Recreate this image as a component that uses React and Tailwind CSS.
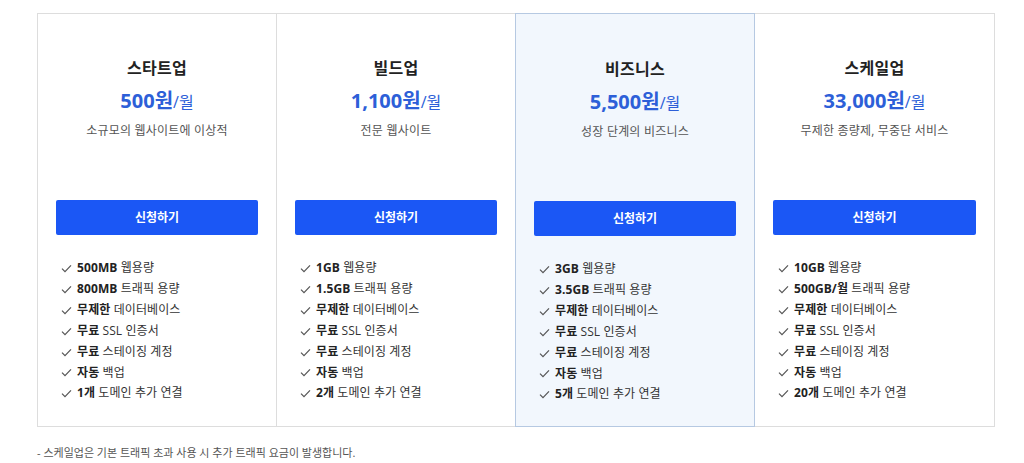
import React from 'react'

const plans = [
  {
    name: '스타트업',
    price: '500원',
    desc: '소규모의 웹사이트에 이상적',
    features: [
      ['500MB', ' 웹용량'],
      ['800MB', ' 트래픽 용량'],
      ['무제한', ' 데이터베이스'],
      ['무료', ' SSL 인증서'],
      ['무료', ' 스테이징 계정'],
      ['자동', ' 백업'],
      ['1개', ' 도메인 추가 연결'],
    ],
  },
  {
    name: '빌드업',
    price: '1,100원',
    desc: '전문 웹사이트',
    features: [
      ['1GB', ' 웹용량'],
      ['1.5GB', ' 트래픽 용량'],
      ['무제한', ' 데이터베이스'],
      ['무료', ' SSL 인증서'],
      ['무료', ' 스테이징 계정'],
      ['자동', ' 백업'],
      ['2개', ' 도메인 추가 연결'],
    ],
  },
  {
    name: '비즈니스',
    price: '5,500원',
    desc: '성장 단계의 비즈니스',
    highlight: true,
    features: [
      ['3GB', ' 웹용량'],
      ['3.5GB', ' 트래픽 용량'],
      ['무제한', ' 데이터베이스'],
      ['무료', ' SSL 인증서'],
      ['무료', ' 스테이징 계정'],
      ['자동', ' 백업'],
      ['5개', ' 도메인 추가 연결'],
    ],
  },
  {
    name: '스케일업',
    price: '33,000원',
    desc: '무제한 종량제, 무중단 서비스',
    features: [
      ['10GB', ' 웹용량'],
      ['500GB/월', ' 트래픽 용량'],
      ['무제한', ' 데이터베이스'],
      ['무료', ' SSL 인증서'],
      ['무료', ' 스테이징 계정'],
      ['자동', ' 백업'],
      ['20개', ' 도메인 추가 연결'],
    ],
  },
]

function Check() {
  return (
    <svg className="w-[11px] h-[9px] mr-[5px] shrink-0" viewBox="0 0 11 9" fill="none">
      <path d="M1 4.6l3 3L10 1.3" stroke="#555" strokeWidth="1.2" />
    </svg>
  )
}

export default function App() {
  return (
    <div
      className="bg-white min-h-[463px] pl-[37px] pt-[13px]"
      style={{ fontFamily: '"Open Sans", "Noto Sans CJK KR", sans-serif' }}
    >
      <div className="w-[958px] grid grid-cols-4 border border-[#dddddd]">
        {plans.map((p, i) => (
          <div
            key={p.name}
            className={
              p.highlight
                ? '-my-px -ml-px border border-[#b6c9e2] bg-[#f2f7fd] px-[18px] pt-[43px] pb-[21px]'
                : i < 3
                ? 'border-r border-[#dddddd] px-[18px] pt-[42px] pb-[20px]'
                : 'px-[18px] pt-[42px] pb-[20px]'
            }
          >
            <h3 className="text-center text-[16px] leading-[24px] font-bold text-[#222] tracking-[0.3px]">{p.name}</h3>
            <p className="mt-[7px] text-center leading-[28px] text-[#2d5fd8]">
              <span className="text-[20px] font-bold">{p.price}</span>
              <span className="text-[16px]">/월</span>
            </p>
            <p className="mt-[6px] text-center text-[12px] leading-[18px] text-[#555] tracking-[0.2px]">{p.desc}</p>
            <button className="mt-[60px] w-full h-[35px] rounded-[2px] bg-[#1b57f5] text-white text-[12px] font-bold">
              신청하기
            </button>
            <ul className="mt-[23px] pl-[5px]">
              {p.features.map(([b, rest], j) => (
                <li key={j} className="flex items-center text-[12px] leading-[20.9px] text-[#333] tracking-[0.1px]">
                  <Check />
                  <span>
                    <b className="font-bold text-[#222]">{b}</b>
                    {rest}
                  </span>
                </li>
              ))}
            </ul>
          </div>
        ))}
      </div>
      <p className="mt-[19px] text-[11px] leading-[14px] text-[#555]">
        - 스케일업은 기본 트래픽 초과 사용 시 추가 트래픽 요금이 발생합니다.
      </p>
    </div>
  )
}
